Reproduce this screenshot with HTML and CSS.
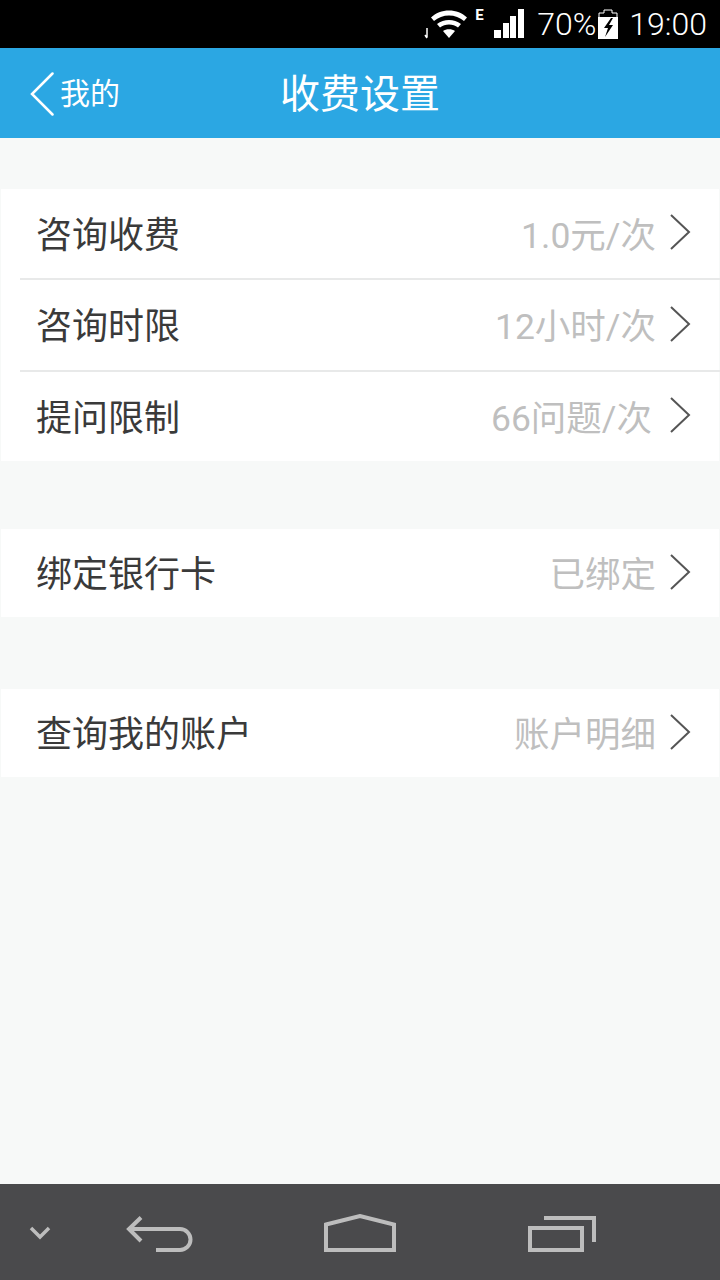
FILE: index.html
```html
<!DOCTYPE html>
<html lang="zh-CN">
<head>
<meta charset="utf-8">
<title>收费设置</title>
<link rel="stylesheet" href="styles.css">
</head>
<body>
<div class="screen">
  <div class="statusbar">
    <svg class="ic-wifi" width="44" height="32" viewBox="0 0 44 32">
      <path d="M3 20v9.500M1 27l2 3" stroke="#fff" stroke-width="1.500" fill="none"/>
      <path d="M7 9.500C16 0 34 0 43 9.500l-3 3.500C32 5.500 18 5.500 10 13z" fill="#fff"/>
      <path d="M13 16c7-5.500 17-5.500 24 0l-3 3.500c-5-4-13-4-18 0z" fill="#fff"/>
      <path d="M19 23c3-2.500 9-2.500 12 0l-6 7z" fill="#fff"/>
    </svg>
    <span class="net">E</span>
    <svg class="ic-signal" width="30" height="30" viewBox="0 0 30 30">
      <path d="M0 21h7v8H0zM9 14h6v15H9zM16 7h6v22h-6zM24 0h6v29h-6z" fill="#fff"/>
    </svg>
    <span class="pct">70%</span>
    <svg class="ic-batt" width="20" height="30" viewBox="0 0 20 30">
      <path d="M6 1h8v3h5v6H1V4h5z" fill="none" stroke="#fff" stroke-width="1"/>
      <path d="M0 8h20v22H0z" fill="#fff"/>
      <path d="M13 9l-7 10h4l-3 9 8-12h-4l4-7z" fill="#000"/>
    </svg>
    <span class="clock">19:00</span>
  </div>

  <header class="titlebar">
    <div class="back">
      <svg width="24" height="44" viewBox="0 0 24 44"><path d="M22.500 1.500 2 22l20.500 20.500" fill="none" stroke="#fff" stroke-width="2.500" stroke-linecap="round"/></svg>
      <span class="back-label">我的</span>
    </div>
    <h1 class="title">收费设置</h1>
  </header>

  <main class="content">
    <section class="group">
      <div class="row"><span class="name">咨询收费</span><span class="value">1.0元/次</span><svg class="chev" width="22" height="36" viewBox="0 0 22 36"><path d="M2 1l18 17L2 35" fill="none" stroke="#555" stroke-width="2"/></svg></div>
      <div class="row"><span class="name">咨询时限</span><span class="value">12小时/次</span><svg class="chev" width="22" height="36" viewBox="0 0 22 36"><path d="M2 1l18 17L2 35" fill="none" stroke="#555" stroke-width="2"/></svg></div>
      <div class="row"><span class="name">提问限制</span><span class="value shift">66问题/次</span><svg class="chev" width="22" height="36" viewBox="0 0 22 36"><path d="M2 1l18 17L2 35" fill="none" stroke="#555" stroke-width="2"/></svg></div>
    </section>
    <section class="group">
      <div class="row"><span class="name">绑定银行卡</span><span class="value">已绑定</span><svg class="chev" width="22" height="36" viewBox="0 0 22 36"><path d="M2 1l18 17L2 35" fill="none" stroke="#555" stroke-width="2"/></svg></div>
    </section>
    <section class="group">
      <div class="row"><span class="name">查询我的账户</span><span class="value">账户明细</span><svg class="chev" width="22" height="36" viewBox="0 0 22 36"><path d="M2 1l18 17L2 35" fill="none" stroke="#555" stroke-width="2"/></svg></div>
    </section>
  </main>

  <nav class="navbar">
    <svg class="nav-hide" width="22" height="14" viewBox="0 0 22 14"><path d="M2 2l9 9 9-9" fill="none" stroke="#bdbdbd" stroke-width="3.500"/></svg>
    <svg class="nav-back" width="68" height="36" viewBox="0 0 68 36"><path d="M15 1.500 3 13l12 12M3 13h51a10.500 10.500 0 0 1 0 21H30" fill="none" stroke="#bdbdbd" stroke-width="4"/></svg>
    <svg class="nav-home" width="72" height="38" viewBox="0 0 72 38"><path d="M2 10.500 36 2l34 8.500V36H2z" fill="none" stroke="#bdbdbd" stroke-width="4"/></svg>
    <svg class="nav-recent" width="68" height="36" viewBox="0 0 68 36"><path d="M2 12h52v22H2zM16 2h50v24" fill="none" stroke="#bdbdbd" stroke-width="4"/></svg>
  </nav>
</div>
</body>
</html>
```

FILE: styles.css
```css
* { box-sizing: border-box; }
html, body { margin: 0; padding: 0; }
body { font-family: Roboto, "Noto Sans CJK SC", sans-serif; background: #f7f9f8; }
.screen { width: 720px; height: 1280px; display: flex; flex-direction: column; background: #f7f9f8; overflow: hidden; }

.statusbar { height: 48px; flex: none; background: #000; color: #fff; display: flex; align-items: center; padding: 0 13px 0 0; justify-content: flex-end; }
.ic-wifi { margin-right: 7px; margin-top: 0; }
.net { font-size: 15px; font-weight: 700; align-self: flex-start; margin: 8px 11px 0 0; line-height: 14px; width: 8px; }
.ic-signal { margin-right: 13px; margin-top: -1px; }
.pct, .clock { font-size: 32px; font-weight: 300; line-height: 48px; }
.pct { margin-right: 1px; }
.ic-batt { margin-right: 11px; margin-left: 1px; }

.titlebar { height: 90px; flex: none; background: #2ba7e3; display: flex; align-items: center; justify-content: center; position: relative; padding-top: 4px; }
.back { position: absolute; left: 30px; top: 24px; display: flex; align-items: center; gap: 6px; }
.back-label { color: #fff; font-size: 30px; line-height: 44px; }
.title { margin: 0; color: #fff; font-size: 40px; font-weight: 400; line-height: 50px; }

.content { flex: 1; padding-top: 51px; display: flex; flex-direction: column; gap: 68px; }
.group { background: #fff; margin: 0 1px; }
.group + .group + .group { margin-top: 4px; }
.row { height: 88px; display: flex; align-items: center; padding: 0 28px 0 35px; position: relative; }
.group .row:not(:last-child) { border-bottom: 2px solid #e8e9e9; margin-left: 19px; padding-left: 16px; margin-right: -1px; padding-right: 29px; }
.group .row:nth-child(1):not(:last-child) { height: 91px; }
.group .row:nth-child(2) { height: 92px; }
.group .row:nth-child(3) { height: 89px; }
.name { flex: 1; font-size: 36px; line-height: 50px; color: #3a3a3a; font-weight: 400; padding-top: 4px; }
.value { font-size: 35.500px; line-height: 50px; color: #bfbfbf; margin-right: 13px; padding-top: 4px; }
.value.shift { margin-right: 17px; }
.chev { flex: none; margin-top: -3px; }

.navbar { height: 96px; flex: none; background: #4a4a4c; position: relative; display: flex; align-items: center; }
.nav-hide { position: absolute; left: 29px; top: 42px; }
.nav-back { position: absolute; left: 126px; top: 32px; }
.nav-home { position: absolute; left: 324px; top: 30px; }
.nav-recent { position: absolute; left: 528px; top: 32px; }
```
